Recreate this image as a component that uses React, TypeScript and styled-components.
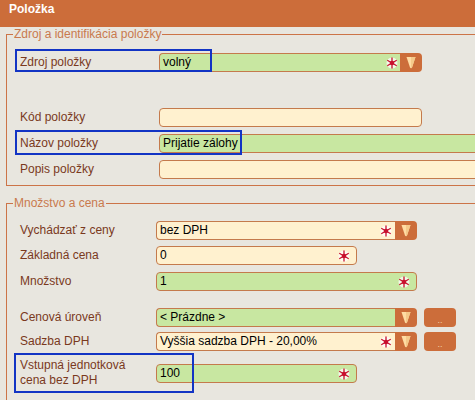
import React from "react";
import styled, { createGlobalStyle } from "styled-components";

const Global = createGlobalStyle`
  html, body { margin: 0; padding: 0; background: #e8e6df; overflow: hidden; }
  body { font-family: "Liberation Sans", Arial, sans-serif; font-size: 12px; }
`;

const Page = styled.div`
  width: 475px;
  height: 400px;
  overflow: hidden;
  background: #e8e6df;
`;

const Header = styled.div`
  height: 27px;
  box-sizing: border-box;
  padding: 2px 9px;
  background: #cc6d3a;
  color: #fff;
  font-weight: bold;
  font-size: 12px;
  line-height: 14px;
`;

const Fieldset = styled.fieldset<{ $mt: number; $pb: number }>`
  width: 620px;
  margin: ${(p) => p.$mt}px 0 0 6px;
  padding: 8px 0 ${(p) => p.$pb}px 0;
  border: 1px solid #cc7448;
  border-right: none;
  min-width: 0;
  box-sizing: border-box;
`;

const Legend = styled.legend`
  margin-left: 6px;
  padding: 0 1px;
  color: #c97a4e;
  font-size: 12px;
  line-height: 14px;
`;

const Row = styled.div<{ $h: number; $mt?: number }>`
  position: relative;
  display: flex;
  align-items: center;
  height: ${(p) => p.$h}px;
  margin-top: ${(p) => p.$mt ?? 0}px;
`;

const Label = styled.div<{ $w: number }>`
  width: ${(p) => p.$w}px;
  flex: none;
  box-sizing: border-box;
  padding-left: 13px;
  color: #7a391d;
  font-size: 12px;
  line-height: 15px;
`;

const Field = styled.div<{ $w?: number; $tone: "green" | "cream"; $flat?: boolean }>`
  position: relative;
  display: flex;
  align-items: center;
  box-sizing: border-box;
  height: 19px;
  ${(p) => (p.$w ? `width: ${p.$w}px; flex: none;` : "flex: 1;")}
  padding-left: 3px;
  background: ${(p) => (p.$tone === "green" ? "#c8e7a1" : "#fff1cf")};
  border: 1px solid #c47a4c;
  ${(p) => (p.$flat ? "border-right: none;" : "")}
  border-radius: ${(p) => (p.$flat ? "4px 0 0 4px" : "4px")};
  color: #000;
  font-size: 12px;
  line-height: 17px;
`;

const Star = styled.svg<{ $r: number }>`
  position: absolute;
  right: ${(p) => p.$r}px;
  top: 3px;
  width: 12px;
  height: 12px;
`;

const DropButton = styled.div`
  width: 22px;
  height: 19px;
  flex: none;
  box-sizing: border-box;
  display: flex;
  align-items: center;
  justify-content: center;
  background: #cc6d3a;
  border-radius: 0 4px 4px 0;
`;

const DotsButton = styled.div`
  width: 32px;
  height: 19px;
  flex: none;
  margin-left: 7px;
  display: flex;
  align-items: flex-end;
  justify-content: center;
  background: #cc6d3a;
  border-radius: 4px;
  color: #f6d0a8;
  font-size: 9px;
  line-height: 14px;
`;

const Highlight = styled.div<{ $left: number; $w: number; $h: number }>`
  position: absolute;
  left: ${(p) => p.$left}px;
  top: 0;
  width: ${(p) => p.$w}px;
  height: ${(p) => p.$h}px;
  box-sizing: border-box;
  border: 2px solid #1234c4;
  pointer-events: none;
  z-index: 2;
`;

const Required = ({ r }: { r: number }) => (
  <Star $r={r} viewBox="0 0 12 12">
    <circle cx="6" cy="6" r="5.5" fill="#ffffff" opacity="0.75" />
    <g stroke="#c8102e" strokeWidth="1.3" strokeLinecap="round">
      <line x1="6" y1="1" x2="6" y2="11" />
      <line x1="1.7" y1="3.5" x2="10.3" y2="8.5" />
      <line x1="1.7" y1="8.5" x2="10.3" y2="3.5" />
    </g>
    <circle cx="6" cy="6" r="2.3" fill="#c8102e" />
  </Star>
);

const Arrow = () => (
  <svg width="10" height="13" viewBox="0 0 10 13">
    <path d="M0.5 1 H9.5 L6 11.5 Q5 13 4 11.5 Z" fill="#ffdca3" />
    <path d="M5 1 H9.5 L6 11.5 Q5.5 12.3 5 12.3 Z" fill="#f5c98a" />
  </svg>
);

export default function App() {
  return (
    <Page>
      <Global />
      <Header>Položka</Header>

      <Fieldset $mt={0} $pb={3}>
        <Legend>Zdroj a identifikácia položky</Legend>
        <Row $h={26}>
          <Label $w={152}>Zdroj položky</Label>
          <Field $w={241} $tone="green" $flat>
            volný
            <Required r={2} />
          </Field>
          <DropButton>
            <Arrow />
          </DropButton>
          <Highlight $left={8} $w={197} $h={23} />
        </Row>
        <Row $h={26} $mt={29}>
          <Label $w={152}>Kód položky</Label>
          <Field $w={263} $tone="cream" />
        </Row>
        <Row $h={26}>
          <Label $w={152}>Názov položky</Label>
          <Field $tone="green">Prijatie zálohy</Field>
          <Highlight $left={8} $w={227} $h={25} />
        </Row>
        <Row $h={26}>
          <Label $w={152}>Popis položky</Label>
          <Field $tone="cream" />
        </Row>
      </Fieldset>

      <Fieldset $mt={10} $pb={20}>
        <Legend>Množstvo a cena</Legend>
        <Row $h={25}>
          <Label $w={149}>Vychádzať z ceny</Label>
          <Field $w={239} $tone="cream" $flat>
            bez DPH
            <Required r={3} />
          </Field>
          <DropButton>
            <Arrow />
          </DropButton>
        </Row>
        <Row $h={25}>
          <Label $w={149}>Základná cena</Label>
          <Field $w={201} $tone="cream">
            0
            <Required r={6} />
          </Field>
        </Row>
        <Row $h={26}>
          <Label $w={149}>Množstvo</Label>
          <Field $w={261} $tone="green">
            1
            <Required r={6} />
          </Field>
        </Row>
        <Row $h={24} $mt={11}>
          <Label $w={149}>Cenová úroveň</Label>
          <Field $w={239} $tone="green" $flat>
            {"< Prázdne >"}
          </Field>
          <DropButton>
            <Arrow />
          </DropButton>
          <DotsButton>..</DotsButton>
        </Row>
        <Row $h={24}>
          <Label $w={149}>Sadzba DPH</Label>
          <Field $w={239} $tone="cream" $flat>
            Vyššia sadzba DPH - 20,00%
            <Required r={3} />
          </Field>
          <DropButton>
            <Arrow />
          </DropButton>
          <DotsButton>..</DotsButton>
        </Row>
        <Row $h={40}>
          <Label $w={149}>
            Vstupná jednotková
            <br />
            cena bez DPH
          </Label>
          <Field $w={201} $tone="green">
            100
            <Required r={6} />
          </Field>
          <Highlight $left={7} $w={180} $h={40} />
        </Row>
      </Fieldset>
    </Page>
  );
}
